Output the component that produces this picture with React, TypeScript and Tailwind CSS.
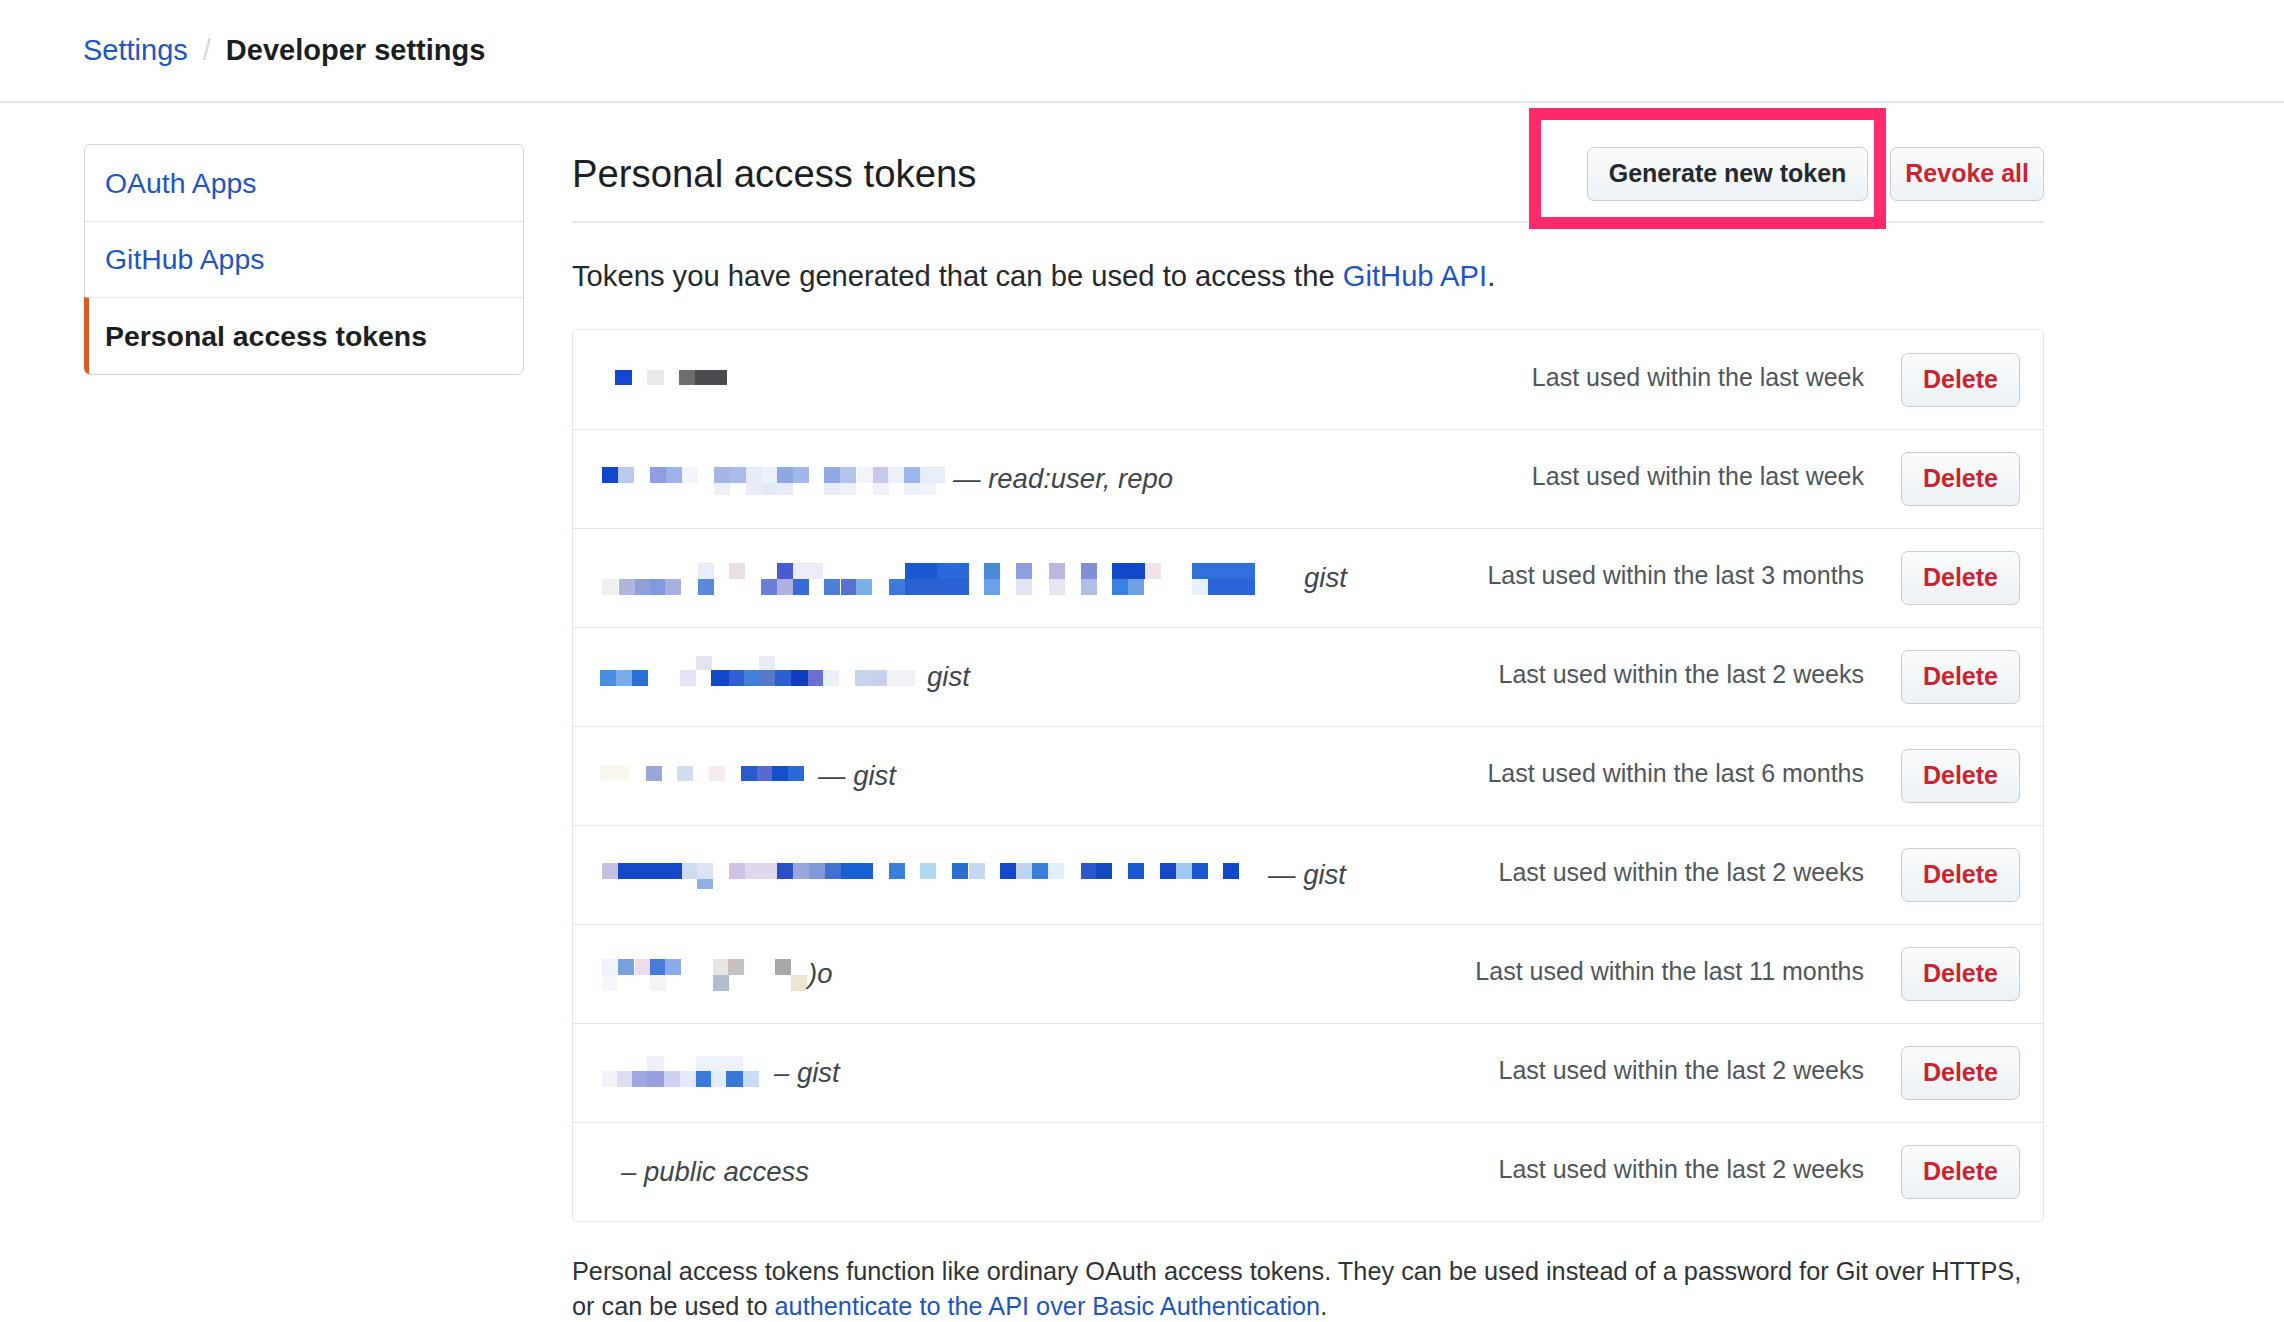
type Block = [number, number, string, number?, number?];

type TokenRow = {
  blocks: Block[];
  w: number;
  scope: string;
  used: string;
};

// pixelated (redacted) token names, x relative to the row start, y inside a 48px strip
const ROWS: TokenRow[] = [
  {
    w: 140,
    scope: "",
    used: "Last used within the last week",
    blocks: [
      [15, 14, "#1148cc", 17, 15],
      [47, 14, "#e9e9ea", 17, 15],
      [79, 14, "#716d6c", 16, 15],
      [95, 14, "#4b4b4f", 32, 15],
    ],
  },
  {
    w: 353,
    scope: "— read:user, repo",
    used: "Last used within the last week",
    blocks: [
      [2, 12, "#1046cc"], [18, 12, "#b8cbee"], [50, 12, "#8d9fe0"], [66, 12, "#9db3e8"],
      [82, 12, "#f2f5fb"], [114, 12, "#a3b6e6"], [130, 12, "#a9bce9"], [146, 12, "#e6edf8"],
      [162, 12, "#edf1fa"], [177, 12, "#8ea8e4"], [193, 12, "#a2b8ea"], [224, 12, "#91a9e2"],
      [240, 12, "#b3c4ea"], [257, 12, "#f3f4fb"], [273, 12, "#c6c9ea"], [288, 12, "#eef1fa"],
      [304, 12, "#9cb6ee"], [320, 12, "#e8eef9", 25],
      [114, 28, "#eef0f7", 16, 12], [146, 28, "#e9edf8", 16, 12], [162, 28, "#e4e9f6", 16, 12],
      [177, 28, "#e8ecf7", 16, 12], [224, 28, "#e8ecf7", 16, 12], [240, 28, "#eef0f8", 16, 12],
      [273, 28, "#f0f1f8", 16, 12], [304, 28, "#eef3fb", 16, 12], [320, 28, "#f0f4fb", 16, 12],
    ],
  },
  {
    w: 704,
    scope: "gist",
    used: "Last used within the last 3 months",
    blocks: [
      [2, 25, "#f0f0f4"], [19, 25, "#b0b6dc"], [35, 25, "#8f9fdc"], [50, 25, "#7f9ae0"],
      [65, 25, "#aab0de"], [98, 25, "#5a8ad8"], [161, 25, "#6a7fd8"], [177, 25, "#b0b0e0"],
      [193, 25, "#3a6ad8"], [224, 25, "#4a80d8"], [241, 25, "#5a70d0"], [256, 25, "#7ab0e8"],
      [289, 25, "#3a7ad8"], [305, 25, "#2b62d2", 64], [384, 25, "#6aa0e8"], [416, 25, "#e0e4f2"],
      [449, 25, "#e8e4f0"], [481, 25, "#b0c0e4"], [512, 25, "#3a80e0"], [528, 25, "#70a0e0"],
      [592, 25, "#e8f0fa"], [608, 25, "#2a66d8", 47],
      [98, 9, "#e8eef8"], [129, 9, "#e8dde8"], [177, 9, "#4a5ad0"], [193, 9, "#ecebf8", 30],
      [305, 9, "#1a5ad0", 32], [337, 9, "#2a6ad8", 32], [384, 9, "#4a8ad8"], [416, 9, "#8aa0e0"],
      [449, 9, "#b8b8e0"], [481, 9, "#8090d8"], [512, 9, "#1048c8", 33], [545, 9, "#eee4ea"],
      [592, 9, "#3070d8", 63],
    ],
  },
  {
    w: 327,
    scope: "gist",
    used: "Last used within the last 2 weeks",
    blocks: [
      [0, 17, "#4a8ee0"], [16, 17, "#78aee8"], [32, 17, "#2a70d8"], [80, 17, "#e0e4f4"],
      [111, 17, "#1048c8", 18], [129, 17, "#3060d0"], [144, 17, "#4080d8"], [159, 17, "#5a78c8"],
      [175, 17, "#2a60d0"], [191, 17, "#1040c0", 17], [208, 17, "#6a70d0"], [223, 17, "#e8f0fa"],
      [255, 17, "#c8d4ec"], [270, 17, "#c8d0ec", 17], [287, 17, "#f2f2f6", 28],
      [96, 3, "#e4e4f0", 16, 14], [159, 3, "#e8ecf6", 16, 14],
    ],
  },
  {
    w: 218,
    scope: "— gist",
    used: "Last used within the last 6 months",
    blocks: [
      [0, 14, "#fbf8f0", 29, 15], [46, 14, "#9aa8d8", 16, 15], [77, 14, "#d4dcf0", 16, 15],
      [109, 14, "#f6ecee", 16, 15], [141, 14, "#2a5ad0", 16, 15], [157, 14, "#5a6ad0", 16, 15],
      [172, 14, "#1450c8", 16, 15], [188, 14, "#2a6ad8", 16, 15],
    ],
  },
  {
    w: 668,
    scope: "— gist",
    used: "Last used within the last 2 weeks",
    blocks: [
      [2, 12, "#c8c0e0"], [18, 12, "#1448c8", 64], [82, 12, "#d0dcf0"], [97, 12, "#dce4f4"],
      [129, 12, "#d0c4e4"], [145, 12, "#e0d8ec", 32], [177, 12, "#2a50c8"], [193, 12, "#98a8d8"],
      [209, 12, "#8098d8"], [225, 12, "#4070d0"], [241, 12, "#1860d0", 32], [289, 12, "#3a80d8"],
      [320, 12, "#b0d8f0"], [352, 12, "#2a70d0"], [369, 12, "#c8d8f0"], [400, 12, "#1448c8"],
      [416, 12, "#c0d4f0"], [432, 12, "#3a80d8"], [448, 12, "#e0eefa"], [481, 12, "#2a58c8"],
      [496, 12, "#1048c0"], [528, 12, "#1a58d0"], [560, 12, "#1448c8"], [576, 12, "#a0c8f0"],
      [592, 12, "#1a58d0"], [623, 12, "#1048c8"], [97, 28, "#90b0e8", 16, 10],
    ],
  },
  {
    w: 208,
    scope: ")o",
    used: "Last used within the last 11 months",
    blocks: [
      [2, 9, "#eef6fc"], [18, 9, "#7aa0e0"], [35, 9, "#ecdcec"], [50, 9, "#4a7ad8"],
      [65, 9, "#8aacec"], [113, 9, "#e8e4e0"], [128, 9, "#c8c0c0"], [175, 9, "#a8a8a8"],
      [2, 25, "#f4f8fc"], [50, 25, "#f4f4f8"], [113, 25, "#b0bcd0"], [191, 25, "#ece4d4"],
    ],
  },
  {
    w: 174,
    scope: "– gist",
    used: "Last used within the last 2 weeks",
    blocks: [
      [2, 22, "#f4f2f8"], [17, 22, "#dcdcf0"], [32, 22, "#a0a8e0"], [47, 22, "#98a0e0", 17],
      [64, 22, "#d0d0f0"], [80, 22, "#e4e8f8"], [96, 22, "#3a7ad8"], [111, 22, "#e4ecf8"],
      [126, 22, "#3a78d8", 17], [143, 22, "#c8dcf4"],
      [47, 7, "#f0eef8", 17, 15], [96, 7, "#eef2fa", 47, 15],
    ],
  },
  {
    w: 21,
    scope: "– public access",
    used: "Last used within the last 2 weeks",
    blocks: [],
  },
];

function Pixels({ blocks, w }: { blocks: Block[]; w: number }) {
  return (
    <svg width={w} height={48} viewBox={`0 0 ${w} 48`} className="block flex-none">
      {blocks.map(([x, y, c, bw, bh], i) => (
        <rect key={i} x={x} y={y} width={bw ?? 16} height={bh ?? 16} fill={c} />
      ))}
    </svg>
  );
}

function Btn({ children, danger }: { children: React.ReactNode; danger?: boolean }) {
  return (
    <button
      className={
        "flex h-[54px] items-center rounded-[7px] border border-[#c8ccd1] bg-linear-to-b from-[#fafbfc] to-[#eef2f5] text-[25px] font-bold " +
        (danger ? "text-[#cb2431]" : "text-[#24292e]")
      }
    >
      {children}
    </button>
  );
}

export default function App() {
  return (
    <div className="min-h-screen w-full bg-white font-['Liberation_Sans',Arial,sans-serif] text-[#24292e]">
      {/* breadcrumb */}
      <div className="flex h-[103px] items-center border-b-2 border-[#e4e6e9] pl-[83px] text-[29px]">
        <a className="text-[#1f55c0]">Settings</a>
        <span className="mx-[15px] text-[#d5d8dc]">/</span>
        <span className="font-bold text-[#1b1f23]">Developer settings</span>
      </div>

      <div className="flex pl-[84px] pt-[41px]">
        {/* side nav */}
        <nav className="w-[440px] flex-none self-start rounded-md border border-[#d1d5da] text-[28.4px]">
          <div className="flex h-[76px] items-center pl-[20px] text-[#1f55c0]">OAuth Apps</div>
          <div className="flex h-[76px] items-center border-t border-[#e1e4e8] pl-[20px] text-[#1f55c0]">
            GitHub Apps
          </div>
          <div className="-ml-px flex h-[77px] items-center rounded-bl-md border-t border-l-[5px] border-t-[#e1e4e8] border-l-[#dd5a26] pl-[16px] font-bold text-[#1b1f23]">
            Personal access tokens
          </div>
        </nav>

        <main className="ml-[48px] w-[1472px] flex-none">
          <div className="relative flex items-center justify-between border-b-2 border-[#e6e8eb] pb-[20px] pt-[3px]">
            <h2 className="text-[38.3px] font-normal leading-none text-[#1b1f23]">Personal access tokens</h2>
            <div className="flex items-center gap-[22px]">
              <Btn>
                <span className="px-[21px]">Generate new token</span>
              </Btn>
              <Btn danger>
                <span className="px-[14px]">Revoke all</span>
              </Btn>
            </div>
            {/* highlight annotation */}
            <div className="pointer-events-none absolute right-[158px] top-[-36px] h-[121px] w-[357px] border-[12px] border-[#fe2a6b]" />
          </div>

          <p className="mt-[36px] text-[29.2px] leading-[34px]">
            Tokens you have generated that can be used to access the <a className="text-[#1f55c0]">GitHub API</a>.
          </p>

          <div className="mt-[36px] rounded-md border border-[#e1e4e8]">
            {ROWS.map((r, i) => (
              <div
                key={i}
                className={
                  "flex h-[99px] items-center pl-[27px] pr-[23px] " + (i > 0 ? "border-t border-[#e1e4e8]" : "")
                }
              >
                <Pixels blocks={r.blocks} w={r.w} />
                {r.scope && (
                  <span className="whitespace-pre text-[27.5px] italic text-[#3f454c]">{r.scope}</span>
                )}
                <div className="ml-auto flex items-center gap-[37px]">
                  <span className="-mt-[4px] text-[25px] text-[#4f565d]">{r.used}</span>
                  <Btn danger>
                    <span className="w-[117px] text-center">Delete</span>
                  </Btn>
                </div>
              </div>
            ))}
          </div>

          <p className="mt-[32px] text-[25.3px] leading-[35px] text-[#2f3337]">
            Personal access tokens function like ordinary OAuth access tokens. They can be used instead of a password for
            Git over HTTPS,
            <br />
            or can be used to <a className="text-[#1f55c0]">authenticate to the API over Basic Authentication</a>.
          </p>
        </main>
      </div>
    </div>
  );
}
